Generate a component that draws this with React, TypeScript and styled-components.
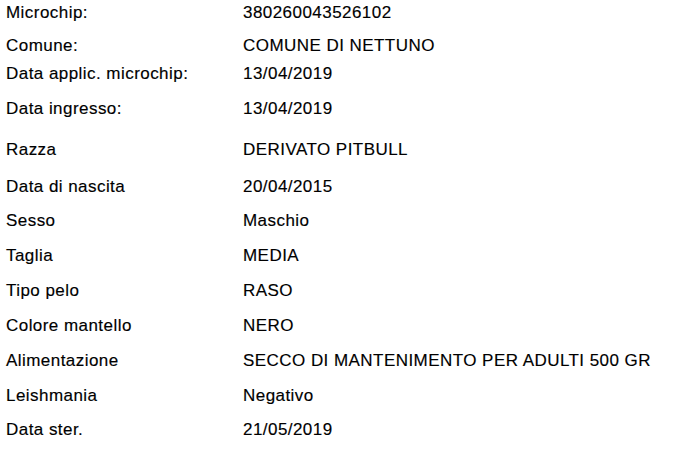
import React from "react";
import styled, { createGlobalStyle } from "styled-components";

type Entry = {
  label: string;
  value: string;
  gap: number;
};

const entries: Entry[] = [
  { label: "Microchip:", value: "380260043526102", gap: 33 },
  { label: "Comune:", value: "COMUNE DI NETTUNO", gap: 28 },
  { label: "Data applic. microchip:", value: "13/04/2019", gap: 35 },
  { label: "Data ingresso:", value: "13/04/2019", gap: 41 },
  { label: "Razza", value: "DERIVATO PITBULL", gap: 37 },
  { label: "Data di nascita", value: "20/04/2015", gap: 34 },
  { label: "Sesso", value: "Maschio", gap: 35 },
  { label: "Taglia", value: "MEDIA", gap: 35 },
  { label: "Tipo pelo", value: "RASO", gap: 35 },
  { label: "Colore mantello", value: "NERO", gap: 35 },
  { label: "Alimentazione", value: "SECCO DI MANTENIMENTO PER ADULTI 500 GR", gap: 35 },
  { label: "Leishmania", value: "Negativo", gap: 34 },
  { label: "Data ster.", value: "21/05/2019", gap: 20 },
];

const GlobalStyle = createGlobalStyle`
  html, body {
    margin: 0;
    padding: 0;
    background: #ffffff;
  }
  body {
    font-family: "Liberation Sans", Arial, sans-serif;
    color: #000000;
  }
`;

const Sheet = styled.div`
  width: 687px;
  height: 457px;
  padding: 3px 0 0 6px;
  box-sizing: border-box;
  display: flex;
  flex-direction: column;
`;

const Row = styled.div<{ $h: number }>`
  display: grid;
  grid-template-columns: 237px 1fr;
  height: ${(p) => p.$h}px;
  font-size: 17px;
  line-height: 20px;
  letter-spacing: 0.45px;
  white-space: nowrap;
  -webkit-text-stroke: 0.15px #000;
`;

const Label = styled.span``;

const Value = styled.span``;

export default function App() {
  return (
    <>
      <GlobalStyle />
      <Sheet>
        {entries.map((e) => (
          <Row key={e.label} $h={e.gap}>
            <Label>{e.label}</Label>
            <Value>{e.value}</Value>
          </Row>
        ))}
      </Sheet>
    </>
  );
}
